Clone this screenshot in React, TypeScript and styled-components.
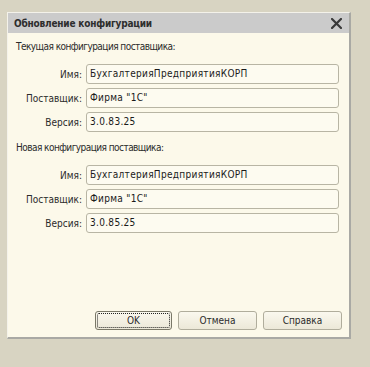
import React from 'react'
import styled, { createGlobalStyle } from 'styled-components'

const GlobalStyle = createGlobalStyle`
  html, body {
    margin: 0;
    padding: 0;
    background: #d8d4c2;
  }
  body {
    width: 370px;
    height: 367px;
    font-family: 'DejaVu Sans Condensed', 'Liberation Sans', Arial, sans-serif;
  }
`

type Field = { label: string; value: string }

const current: Field[] = [
  { label: 'Имя:', value: 'БухгалтерияПредприятияКОРП' },
  { label: 'Поставщик:', value: 'Фирма "1С"' },
  { label: 'Версия:', value: '3.0.83.25' },
]

const next: Field[] = [
  { label: 'Имя:', value: 'БухгалтерияПредприятияКОРП' },
  { label: 'Поставщик:', value: 'Фирма "1С"' },
  { label: 'Версия:', value: '3.0.85.25' },
]

export default function App() {
  return (
    <>
      <GlobalStyle />
      <Page>
        <Dialog>
          <TitleBar>
            <Title>Обновление конфигурации</Title>
            <CloseButton aria-label="close">
              <svg width="11" height="11" viewBox="0 0 11 11">
                <path d="M1 1 L10 10 M10 1 L1 10" stroke="#3a3a3a" strokeWidth="2.2" strokeLinecap="square" />
              </svg>
            </CloseButton>
          </TitleBar>
          <Content>
            <Group fields={current} caption="Текущая конфигурация поставщика:" />
            <Group fields={next} caption="Новая конфигурация поставщика:" />
            <Spacer />
            <Footer>
              <Button $focused>OK</Button>
              <Button>Отмена</Button>
              <Button>Справка</Button>
            </Footer>
          </Content>
        </Dialog>
      </Page>
    </>
  )
}

function Group({ caption, fields }: { caption: string; fields: Field[] }) {
  return (
    <Section>
      <Caption>{caption}</Caption>
      <Rows>
        {fields.map((f) => (
          <Row key={f.label}>
            <Label>{f.label}</Label>
            <Input>{f.value}</Input>
          </Row>
        ))}
      </Rows>
    </Section>
  )
}

const Page = styled.div`
  padding: 12px 0 0 7px;
`

const Dialog = styled.div`
  width: 344px;
  height: 327px;
  box-sizing: border-box;
  display: flex;
  flex-direction: column;
  background: #fcf9ea;
  border-top: 1px solid #f4f2ea;
  border-left: 1px solid #f4f2ea;
  border-right: 2px solid #a9a9a4;
  border-bottom: 2px solid #a9a9a4;
`

const TitleBar = styled.div`
  height: 20px;
  display: flex;
  align-items: center;
  justify-content: space-between;
  padding: 0 7px 0 6px;
  background: #cbcbcb;
`

const Title = styled.div`
  font-weight: bold;
  font-size: 10px;
  letter-spacing: -0.2px;
  color: #2e2e2e;
`

const CloseButton = styled.div`
  display: flex;
  align-items: center;
`

const Content = styled.div`
  flex: 1;
  display: flex;
  flex-direction: column;
  padding: 7px 10px 7px 8px;
`

const Section = styled.div`
  display: flex;
  flex-direction: column;
  margin-bottom: 9px;
`

const Caption = styled.div`
  font-size: 10px;
  letter-spacing: -0.55px;
  line-height: 14px;
  color: #2b2b2b;
  margin-bottom: 10px;
`

const Rows = styled.div`
  display: grid;
  grid-auto-flow: row;
  grid-row-gap: 4px;
`

const Row = styled.div`
  display: grid;
  grid-template-columns: 66px 1fr;
  column-gap: 4px;
  align-items: center;
`

const Label = styled.div`
  font-size: 10px;
  color: #2b2b2b;
  text-align: right;
`

const Input = styled.div`
  height: 20px;
  box-sizing: border-box;
  border: 1px solid #b8b5a4;
  border-radius: 3px;
  background: #fdfbf0;
  padding: 0 3px;
  font-size: 10px;
  letter-spacing: 0.3px;
  line-height: 18px;
  color: #1a1a1a;
`

const Spacer = styled.div`
  flex: 1;
`

const Footer = styled.div`
  display: flex;
  justify-content: flex-end;
  gap: 6px;
  margin-right: -3px;
`

const Button = styled.div<{ $focused?: boolean }>`
  width: 79px;
  height: 19px;
  box-sizing: border-box;
  border: 1px solid #b0ad9c;
  border-radius: 3px;
  background: linear-gradient(#faf8ee, #ece8d8);
  display: flex;
  align-items: center;
  justify-content: center;
  font-size: 10px;
  color: #2b2b2b;
  position: relative;
  ${(p) =>
    p.$focused &&
    `
    width: 77px;
    border-color: #7a7868;
    &::after {
      content: '';
      position: absolute;
      inset: 1px;
      border: 1px dotted #222;
      border-radius: 2px;
    }
  `}
`
